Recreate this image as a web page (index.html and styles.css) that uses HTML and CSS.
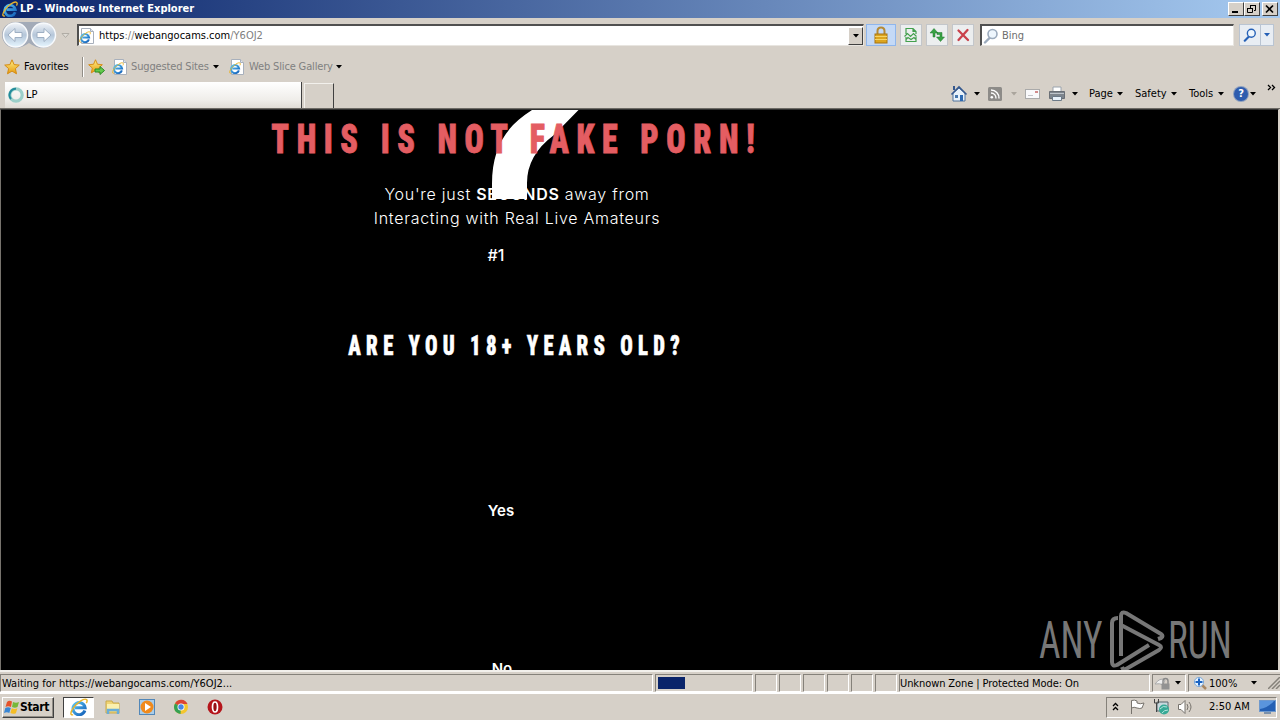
FILE: index.html
```html
<!DOCTYPE html>
<html lang="en">
  <head>
    <meta charset="UTF-8" />
    <title>LP - Windows Internet Explorer</title>
    <link rel="stylesheet" href="styles.css">
  </head>
  <body>
    <svg class="sprites">
      <defs>
        <linearGradient id="gold" x1="0" y1="0" x2="0" y2="1">
          <stop offset="0" stop-color="#fff08a" />
          <stop offset="1" stop-color="#e69a0c" />
        </linearGradient>
        <linearGradient id="blue" x1="0" y1="0" x2="1" y2="1">
          <stop offset="0" stop-color="#58c4f5" />
          <stop offset="1" stop-color="#1560b8" />
        </linearGradient>
        <symbol id="ie" viewBox="0 0 16 16">
          <path d="M13.2 11.2A5.4 5.4 0 1 1 13.4 8.6H4.5" fill="none" stroke="url(#blue)" stroke-width="2.7" />
          <path d="M2.8 14.8C0 15.8.2 12.6 3 8.8 6.2 4.5 12.5-.4 14.7 1.4c.8.7.5 2-.2 3.2" fill="none" stroke="#e9b52c" stroke-width="1.3" />
        </symbol>
        <symbol id="page" viewBox="0 0 16 16">
          <path d="M2.5.5h9l3 3v12h-12z" fill="#fff" stroke="#a8b0bc" />
          <path d="M11.5.5v3h3" fill="#dde5ef" stroke="#a8b0bc" />
          <use href="#ie" x="0" y="3" width="12" height="12" />
        </symbol>
        <symbol id="star" viewBox="0 0 16 16">
          <path d="M8 .8l2.1 4.8 5.2.5-3.9 3.5 1.1 5.2L8 12.1l-4.5 2.7 1.1-5.2L.7 6.1l5.2-.5z" fill="url(#gold)" stroke="#d58b13" />
        </symbol>
        <symbol id="down" viewBox="0 0 6 4">
          <path d="M0 0h6L3 3.5z" fill="currentColor" />
        </symbol>
        <symbol id="lens" viewBox="0 0 16 16">
          <path d="M6.5 10L2 14.5" stroke="currentColor" stroke-width="2.4" stroke-linecap="round" />
          <circle cx="9.5" cy="6" r="4.5" fill="#eef6fd" stroke="currentColor" stroke-width="1.6" />
        </symbol>
      </defs>
    </svg>

    <div class="title-bar">
      <svg class="icon16"><use href="#ie" /></svg>
      <span class="title">LP - Windows Internet Explorer</span>
      <div class="window-buttons">
        <div class="win-btn"><svg width="12" height="10"><path d="M2 8h6" stroke="#000" stroke-width="2" /></svg></div>
        <div class="win-btn"><svg width="12" height="10"><path d="M4.5 5V1.5h5v5H8M4 1.500h6M1.500 4.500h5v4h-5zM1 4.500h6" fill="none" stroke="#000" /></svg></div>
        <div class="win-btn close"><svg width="12" height="10"><path d="M2 1.500l7 7M9 1.500l-7 7" stroke="#000" stroke-width="1.700" /></svg></div>
      </div>
    </div>

    <div class="nav-bar">
      <svg class="history" width="74" height="30">
        <defs>
          <linearGradient id="orb" x1="0" y1="0" x2="0" y2="1">
            <stop offset="0" stop-color="#f1f4f8" />
            <stop offset=".5" stop-color="#b5c6d9" />
            <stop offset="1" stop-color="#e6f6ff" />
          </linearGradient>
        </defs>
        <path d="M15 2h28a13 13 0 0 1 0 26q-7 0-14-5-7 5-14 5A13 13 0 0 1 15 2z" fill="#a3abb8" />
        <circle cx="15.500" cy="15" r="12" fill="url(#orb)" stroke="#f8fafc" stroke-width="1.500" />
        <circle cx="43.500" cy="15" r="12" fill="url(#orb)" stroke="#f8fafc" stroke-width="1.500" />
        <path d="M8 15l7-6.500v4h7v5h-7v4z" fill="#fff" stroke="#9eafc3" />
        <path d="M51 15l-7-6.500v4h-7v5h7v4z" fill="#fff" stroke="#9eafc3" />
        <path d="M62 13.500h7l-3.500 4z" fill="#dedbd5" stroke="#b0aca5" />
      </svg>
      <div class="address">
        <svg class="icon16"><use href="#page" /></svg>
        <span class="url">https<i>://</i>webangocams.com<i>/Y6OJ2</i></span>
        <div class="drop-btn"><svg class="arrow"><use href="#down" /></svg></div>
      </div>
      <div class="tool-btn lock">
        <svg width="16" height="18">
          <path d="M4.500 9V5q0-3.500 3.500-3.500T11.500 5v4" fill="none" stroke="#b58a35" stroke-width="2" />
          <rect x="2" y="8" width="12" height="9" fill="#dca51f" stroke="#a87512" />
          <path d="M2 10.500h12M2 13.500h12" stroke="#f5d468" />
        </svg>
      </div>
      <div class="tool-btn">
        <svg width="16" height="16"><path d="M3 7V1.500h7l3 3V7M3 10v4.500h10V10M10 1.500v3h3M1.500 9.500l3-3 3 3 3-3 3 3M3 12.500l2-2 3 2 3-2 2 2" fill="none" stroke="#43a04d" stroke-width="1.200" /></svg>
      </div>
      <div class="tool-btn">
        <svg width="16" height="16"><path d="M4 10V6H1L5 1.500 9 6H6v4zM8 5.500h5V10h2.500L11.500 14.500 7.500 10H11V7.500H8z" fill="#38a244" stroke="#247832" stroke-width=".5" /></svg>
      </div>
      <div class="tool-btn">
        <svg width="16" height="16"><path d="M3.500 3.500L13 13M12.500 3L3.500 13" stroke="#c9414b" stroke-width="2.300" stroke-linecap="round" /></svg>
      </div>
      <div class="search">
        <svg class="icon16"><use href="#lens" /></svg>
        <span>Bing</span>
      </div>
      <div class="search-btn">
        <div class="go"><svg class="icon14"><use href="#lens" /></svg></div>
        <div class="more"><svg class="arrow"><use href="#down" /></svg></div>
      </div>
    </div>

    <div class="favorites-bar">
      <svg class="icon16"><use href="#star" /></svg>
      <span class="fav">Favorites</span>
      <div class="separator"></div>
      <svg class="add-fav" width="18" height="18">
        <use href="#star" width="15" height="15" y="1" />
        <path d="M7 11h5V8.500l4.500 4-4.500 4V14H7z" fill="#63c94c" stroke="#2b8a26" />
      </svg>
      <svg class="icon16"><use href="#page" /></svg>
      <span class="sites">Suggested Sites</span>
      <svg class="arrow"><use href="#down" /></svg>
      <svg class="icon16 slice"><use href="#page" /></svg>
      <span class="gallery">Web Slice Gallery</span>
      <svg class="arrow"><use href="#down" /></svg>
    </div>

    <div class="tab-bar">
      <div class="tab">
        <svg width="18" height="18">
          <circle cx="9" cy="9" r="6.200" fill="none" stroke="#9ccfc9" stroke-width="3.200" />
          <path d="M4 13A6.300 6.300 0 0 1 9 2.700" fill="none" stroke="#238b9b" stroke-width="2" />
        </svg>
        <span>LP</span>
      </div>
      <div class="new-tab"></div>
      <div class="commands">
        <svg class="home" width="18" height="18">
          <path d="M3 8v8h12V8L9 3z" fill="#e9f2fa" stroke="#51729c" />
          <path d="M1.500 9.500L9 2l7.500 7.500" fill="none" stroke="#35588e" stroke-width="1.600" />
          <path d="M4 1v4" stroke="#35588e" stroke-width="2" />
          <path d="M10 10h3v6h-3z" fill="#2c69b2" />
          <path d="M5 10h3v3H5z" fill="#4778ae" />
        </svg>
        <svg class="arrow"><use href="#down" /></svg>
        <svg class="rss" width="14" height="14">
          <rect width="14" height="14" rx="1.500" fill="#8d8b88" />
          <circle cx="3.800" cy="10.200" r="1.300" fill="#fff" />
          <path d="M3 6a5 5 0 0 1 5 5.500M3 3a8 8 0 0 1 8 8.500" fill="none" stroke="#fff" stroke-width="1.400" />
        </svg>
        <svg class="arrow off"><use href="#down" /></svg>
        <svg class="mail" width="15" height="11">
          <rect x=".5" y=".5" width="14" height="9" fill="#f9f9fb" stroke="#aaa" />
          <path d="M3 6.500h5" stroke="#c4c4c8" />
          <path d="M10 2h3v2h-3z" fill="#d28b8b" />
        </svg>
        <svg class="printer" width="18" height="18">
          <path d="M5 7V2h8v5" fill="#fff" stroke="#9aa3ad" />
          <path d="M1.500 6.500h15v7h-15z" fill="#7e858d" stroke="#6a6f76" />
          <path d="M2 8.500h14" stroke="#bfc5cb" />
          <path d="M4.500 11.500h9v4h-9z" fill="#e8f1fa" stroke="#6c7a88" />
        </svg>
        <svg class="arrow"><use href="#down" /></svg>
        <span class="menu-page">Page</span>
        <svg class="arrow"><use href="#down" /></svg>
        <span class="menu-safety">Safety</span>
        <svg class="arrow"><use href="#down" /></svg>
        <span class="menu-tools">Tools</span>
        <svg class="arrow"><use href="#down" /></svg>
        <div class="help">?</div>
        <svg class="arrow"><use href="#down" /></svg>
        <svg class="chevrons" width="9" height="8"><path d="M1 1l2.500 2.500L1 6M5 1l2.500 2.500L5 6" fill="none" stroke="#000" stroke-width="1.300" /></svg>
      </div>
    </div>

    <div class="viewport">
      <svg class="swoosh" width="100" height="90">
        <path d="M40 0H86.500L62 25Q35 45 35 73V89H0V74C0 38 14 16 40 0z" fill="#fff" />
      </svg>
      <div class="landing">
        <h1><span>THIS IS NOT FAKE PORN!</span></h1>
        <p class="intro">
          You're just <b>SECONDS</b> away from<br />
          Interacting with Real Live Amateurs
        </p>
        <p class="step">#1</p>
        <h2><span>ARE YOU 18+ YEARS OLD?</span></h2>
        <p class="answer yes">Yes</p>
        <p class="answer no">No</p>
      </div>
      <div class="watermark">
        <span class="any">ANY</span>
        <svg width="56" height="62" fill="none" stroke="#777" stroke-width="4" stroke-linejoin="round">
          <path d="M9 8Q3 8 3 13V52Q3 57 8 55L40 35" />
          <path d="M12 46V6Q12 1 17 3L52 24Q55 26 52 28L49 29" />
          <path d="M12 15L50 35Q54 37 50 40L17 59Q14 60 13 57" />
        </svg>
        <span class="run">RUN</span>
      </div>
    </div>

    <div class="status-bar">
      <div class="pane message"><span>Waiting for https://webangocams.com/Y6OJ2...</span></div>
      <div class="pane progress"><div class="progress-fill"></div></div>
      <div class="pane small"></div>
      <div class="pane small"></div>
      <div class="pane small"></div>
      <div class="pane small"></div>
      <div class="pane small"></div>
      <div class="pane small"></div>
      <div class="pane zone"><span>Unknown Zone | Protected Mode: On</span></div>
      <div class="pane privacy">
        <svg width="20" height="16">
          <path d="M2 9q5-7 10-4l-2 5q-3-2-8-1z" fill="#eee" stroke="#aaa" />
          <path d="M10 9V6q0-2.500 2.500-2.500T15 6v3" fill="none" stroke="#888" stroke-width="1.400" />
          <path d="M8.500 8.500h8v6h-8z" fill="#929292" />
        </svg>
        <svg class="arrow"><use href="#down" /></svg>
      </div>
      <div class="pane zoom">
        <svg width="15" height="15">
          <path d="M8 8l5 5" stroke="#a98762" stroke-width="2.500" />
          <circle cx="6" cy="6" r="4.600" fill="#e6f3ff" stroke="#7da9d8" />
          <path d="M6 2.500v7M2.500 6h7" stroke="#1c64c2" stroke-width="2" />
        </svg>
        <span>100%</span>
        <svg class="arrow"><use href="#down" /></svg>
        <svg class="grip" width="12" height="12"><path d="M0 12L12 0M4 12l8-8M8 12l4-4" stroke="#85817a" stroke-width="1.500" /></svg>
      </div>
    </div>

    <div class="taskbar">
      <div class="start">
        <svg width="16" height="16">
          <path d="M3 3q2-2 5-.5L7 8Q4 6.500 1.500 8z" fill="#e5532b" />
          <path d="M9 3q3 1.500 6 0l-1.500 5Q11 9.500 8 8z" fill="#76b83a" />
          <path d="M1.300 9Q4 7.500 6.800 9l-1.500 5Q3 12.500 0 14z" fill="#3986d4" />
          <path d="M7.800 9.200q3 1.500 5.600 0l-1.500 5q-3 1.300-5.500-.2z" fill="#f5bd25" />
        </svg>
        <span>Start</span>
      </div>
      <div class="task active"><svg width="18" height="18"><use href="#ie" /></svg></div>
      <svg class="task-icon" width="18" height="18">
        <path d="M2 3h6l1 2h6v10H2z" fill="#f0d475" stroke="#c9a94a" />
        <path d="M3 6h12v5H3z" fill="#fbf0ae" />
        <path d="M4 16v-4h10v4" fill="none" stroke="#69add8" stroke-width="2.500" />
      </svg>
      <svg class="task-icon" width="18" height="18">
        <rect x="1.500" y="1.500" width="15" height="15" fill="#a9cdea" stroke="#5287b8" />
        <circle cx="9" cy="9" r="6.500" fill="#f08a1c" />
        <path d="M7 5l6 4-6 4z" fill="#fff" />
      </svg>
      <svg class="task-icon" width="18" height="18">
        <circle cx="9" cy="9" r="7" fill="#f4c62e" />
        <path d="M9 9L3 5.400A7 7 0 0 1 15.500 6H9z" fill="#dc4534" />
        <path d="M9 9l-.5 7A7 7 0 0 1 3 5.400z" fill="#35a053" />
        <circle cx="9" cy="9" r="3.500" fill="#fff" />
        <circle cx="9" cy="9" r="2.700" fill="#4887e4" />
      </svg>
      <svg class="task-icon" width="18" height="18">
        <circle cx="9" cy="9" r="7.500" fill="#b5151b" />
        <ellipse cx="9" cy="9" rx="2.500" ry="5" fill="#981015" stroke="#fff" stroke-width="1.700" />
      </svg>
      <div class="tray">
        <svg class="tray-up" width="8" height="10"><path d="M1 4l2.500-2.500L6 4M1 8l2.500-2.500L6 8" fill="none" stroke="#000" stroke-width="1.300" /></svg>
        <svg class="tray-flag" width="17" height="16"><path d="M2.500 15V1.500q3-1 5.500.5v2q3 1.500 7 0l-2 5q-2 1-5 0-3-1.500-5.500 0" fill="#fff" stroke="#77736d" /></svg>
        <svg class="tray-net" width="18" height="18">
          <path d="M4 4h11v9H4z" fill="#c8d9de" stroke="#59666c" />
          <path d="M1.500 1v4h4V1M3.500 5v9" fill="none" stroke="#444" />
          <circle cx="11" cy="11.500" r="5" fill="#36a995" />
          <path d="M7 11q3-4 7-2M9 15q2-3 6-3" stroke="#b4e4dd" fill="none" />
        </svg>
        <svg class="tray-sound" width="18" height="16">
          <path d="M1.500 5.500H4l4-4v13l-4-4H1.500z" fill="#fff" stroke="#77736d" />
          <path d="M10 5q2 3 0 6M12 3q4 5 0 10" fill="none" stroke="#77736d" />
        </svg>
        <span class="clock">2:50 AM</span>
        <svg class="desktop" width="17" height="14">
          <rect x=".5" y=".5" width="16" height="11" fill="#2460b4" stroke="#6f99cd" />
          <path d="M1 9Q9 8 15 1H1z" fill="#5a95dd" />
          <path d="M5 13h7" stroke="#7c91aa" stroke-width="2" />
        </svg>
      </div>
    </div>
  </body>
</html>
```
FILE: styles.css
```css
body {
  margin: 0;
  width: 1280px;
  height: 720px;
  overflow: hidden;
  display: flex;
  flex-direction: column;
  background: #d6d0c8;
  color: #000;
  font-family: "DejaVu Sans Condensed", "DejaVu Sans", sans-serif;
  font-stretch: condensed;
  font-size: 11px;
  line-height: 14px;
  white-space: nowrap;
}
svg {
  display: block;
  flex: none;
}
.sprites {
  position: absolute;
  width: 0;
  height: 0;
}
.icon16 {
  width: 16px;
  height: 16px;
}
.icon14 {
  width: 14px;
  height: 14px;
}
.arrow {
  width: 6px;
  height: 4px;
}
.arrow.off {
  color: #aaa59d;
}
span {
  flex: none;
}

/* title bar */
.title-bar {
  height: 18px;
  display: flex;
  align-items: center;
  padding: 0 2px;
  background: linear-gradient(to right, #0a246a, #a6caf0);
}
.title {
  margin-left: 2px;
  color: #fff;
  font-weight: bold;
}
.window-buttons {
  display: flex;
  margin-left: auto;
}
.win-btn {
  width: 16px;
  height: 14px;
  box-sizing: border-box;
  padding: 1px;
  background: #d6d0c8;
  border: 1px solid;
  border-color: #fff #404040 #404040 #fff;
}
.win-btn.close {
  margin-left: 2px;
}

/* address row */
.nav-bar {
  height: 34px;
  display: flex;
  align-items: center;
}
.history {
  margin-right: 3px;
}
.address,
.search {
  height: 22px;
  box-sizing: border-box;
  display: flex;
  align-items: center;
  background: #fff;
  border: 1px solid;
  border-color: #505050 #e8e5e0 #e8e5e0 #505050;
  border-width: 2px 1px 1px 2px;
}
.address {
  width: 787px;
}
.url {
  margin-left: 4px;
}
.url i {
  font-style: normal;
  color: #808080;
}
.drop-btn {
  width: 15px;
  height: 18px;
  box-sizing: border-box;
  margin-left: auto;
  display: flex;
  align-items: center;
  justify-content: center;
  background: #d6d0c8;
  border: 1px solid;
  border-color: #fff #404040 #404040 #fff;
}
.tool-btn {
  width: 22px;
  height: 22px;
  box-sizing: border-box;
  margin-right: 4px;
  display: flex;
  align-items: center;
  justify-content: center;
  background: #eceeef;
  border: 1px solid #c3c6ca;
}
.tool-btn.lock {
  width: 30px;
  margin: 0 4px 0 2px;
  background: #c4d9f6;
  border-color: #8fb6ec;
}
.search {
  width: 254px;
  margin-left: 2px;
  color: #6d6d6d;
}
.search .icon16 {
  margin: 0 3px 0 1px;
  color: #9cabbd;
}
.search-btn {
  width: 35px;
  height: 22px;
  box-sizing: border-box;
  margin-left: 5px;
  display: flex;
  border: 1px solid #b9c4d2;
  background: #e8edf3;
  color: #2560b6;
}
.go {
  width: 20px;
  display: flex;
  align-items: center;
  justify-content: center;
  border-right: 1px solid #b9c4d2;
}
.more {
  flex: 1;
  display: flex;
  align-items: center;
  justify-content: center;
}

/* favorites row */
.favorites-bar {
  height: 29px;
  display: flex;
  align-items: center;
  padding-left: 4px;
}
.fav {
  width: 57px;
  margin-left: 4px;
}
.separator {
  width: 1px;
  height: 20px;
  margin-left: 1px;
  background: #918d86;
  border-right: 1px solid #fff;
}
.add-fav {
  margin: 0 6px 0 4px;
}
.sites,
.gallery {
  color: #808080;
  letter-spacing: -0.15px;
}
.sites {
  width: 82px;
  margin-left: 3px;
}
.slice {
  margin-left: 10px;
}
.gallery {
  width: 87px;
  margin-left: 4px;
}

/* tabs and command bar */
.tab-bar {
  height: 27px;
  display: flex;
  align-items: flex-end;
  padding-left: 5px;
  border-bottom: 1px solid #6d6a65;
}
.tab {
  width: 297px;
  height: 26px;
  box-sizing: border-box;
  display: flex;
  align-items: center;
  padding-left: 2px;
  background: linear-gradient(#fff, #efede9 70%, #e0dcd6);
  border-right: 1px solid #404040;
}
.tab span {
  margin-left: 1px;
}
.new-tab {
  width: 30px;
  height: 25px;
  box-sizing: border-box;
  margin-left: 2px;
  border: 1px solid #f2f0ec;
  border-right-color: #404040;
  border-bottom: 0;
}
.commands {
  height: 28px;
  margin-left: auto;
  padding-right: 4px;
  display: flex;
  align-items: center;
}
.home {
  margin-right: 6px;
}
.rss {
  margin: 0 9px 0 8px;
}
.mail {
  margin: 0 8px 0 8px;
}
.printer {
  margin-right: 6px;
}
.menu-page {
  width: 28px;
  margin-left: 11px;
}
.menu-safety {
  width: 36px;
  margin-left: 12px;
}
.menu-tools {
  width: 29px;
  margin-left: 12px;
}
.help {
  width: 14px;
  height: 14px;
  margin: 0 2px 0 10px;
  border-radius: 50%;
  background: #2e5cae;
  box-shadow: 0 0 0 1px #8d9fbe;
  color: #fff;
  font-weight: bold;
  text-align: center;
}
.chevrons {
  margin: -12px 0 0 11px;
}

/* page */
.viewport {
  position: relative;
  height: 561px;
  box-sizing: border-box;
  margin-right: 1px;
  border-top: 1px solid #303030;
  border-left: 1px solid #77736d;
  border-right: 1px solid #d6d0c8;
  background: #000;
  color: #fff;
  overflow: hidden;
}
.swoosh {
  position: absolute;
  left: 491px;
  top: 0;
}
.landing {
  position: relative;
  width: 1032px;
  font-family: Inter, "Open Sans", sans-serif;
  font-size: 16px;
  line-height: 24px;
  text-align: center;
}
.landing h1,
.landing h2,
.landing p {
  margin: 0;
}
.landing h1 span,
.landing h2 span {
  display: inline-block;
  font-family: Roboto, sans-serif;
  font-weight: 900;
}
.landing h1 {
  height: 72px;
  color: #e45d62;
  font-size: 41px;
  line-height: 57px;
}
.landing h1 span {
  letter-spacing: 9.8px;
  transform: scaleX(0.78);
  -webkit-text-stroke: 0.8px #e45d62;
}
.intro {
  font-weight: 300;
  letter-spacing: 0.73px;
}
.intro b {
  font-weight: 600;
}
.step {
  width: 990px;
  padding-top: 13px;
  font-weight: 500;
}
.landing h2 {
  padding-top: 61px;
  font-size: 27px;
  line-height: 36px;
}
.landing h2 span {
  letter-spacing: 6.8px;
  transform: scaleX(0.77);
  -webkit-text-stroke: 0.5px #fff;
}
.answer {
  width: 1000px;
  font-size: 15px;
  font-weight: 600;
}
.yes {
  padding-top: 135px;
}
.no {
  width: 1002px;
  padding-top: 134px;
}
.watermark {
  position: absolute;
  left: 1038px;
  top: 500px;
  width: 194px;
  height: 62px;
  display: flex;
  align-items: center;
  color: #777;
  font-family: Roboto, sans-serif;
  font-size: 51px;
  font-weight: 400;
  line-height: 64px;
}
.watermark span {
  transform: scaleX(0.73);
  transform-origin: left;
}
.any {
  width: 70px;
}
.run {
  margin-left: 3px;
}

/* status bar */
.status-bar {
  height: 24px;
  box-sizing: border-box;
  display: flex;
  padding-top: 2px;
  border-top: 2px solid #f2f0ec;
  border-bottom: 2px solid #fff;
}
.pane {
  height: 18px;
  box-sizing: border-box;
  margin-right: 2px;
  display: flex;
  align-items: center;
  border: 1px solid;
  border-color: #85817a #fff #fff #85817a;
}
.pane span {
  padding-top: 1px;
}
.message {
  width: 653px;
  padding-left: 1px;
}
.progress {
  width: 98px;
  padding-left: 2px;
}
.progress-fill {
  width: 27px;
  height: 12px;
  background: #0a246a;
}
.small {
  width: 22px;
}
.zone {
  width: 251px;
}
.zone span {
  letter-spacing: -0.09px;
}
.privacy {
  width: 34px;
}
.privacy .arrow {
  margin-left: 2px;
}
.zoom {
  flex: 1;
  margin-right: 0;
  padding-left: 4px;
  border-right: 0;
}
.zoom span {
  width: 42px;
  margin-left: 1px;
}
.grip {
  margin-left: auto;
}

/* taskbar */
.taskbar {
  flex: 1;
  display: flex;
  align-items: center;
  padding: 0 3px 0 2px;
}
.start {
  width: 52px;
  height: 21px;
  box-sizing: border-box;
  display: flex;
  align-items: center;
  padding-left: 1px;
  border: 1px solid;
  border-color: #fff #404040 #404040 #fff;
  box-shadow: inset -1px -1px 0 #928e87;
  font-size: 12px;
  font-weight: bold;
}
.start span {
  letter-spacing: -0.3px;
}
.task {
  width: 31px;
  height: 21px;
  box-sizing: border-box;
  margin: 0 10px 0 9px;
  display: flex;
  align-items: center;
  justify-content: center;
  background: #fff;
  border: 1px solid;
  border-color: #404040 #fff #fff #404040;
}
.task-icon {
  margin-right: 16px;
}
.tray {
  width: 171px;
  height: 21px;
  box-sizing: border-box;
  margin-left: auto;
  padding-left: 5px;
  display: flex;
  align-items: center;
  border: 1px solid;
  border-color: #85817a #fff #fff #85817a;
}
.tray-up {
  margin-right: 9px;
}
.tray-net {
  margin: 0 6px 0 7px;
}
.clock {
  width: 50px;
  margin-left: 14px;
}
```
